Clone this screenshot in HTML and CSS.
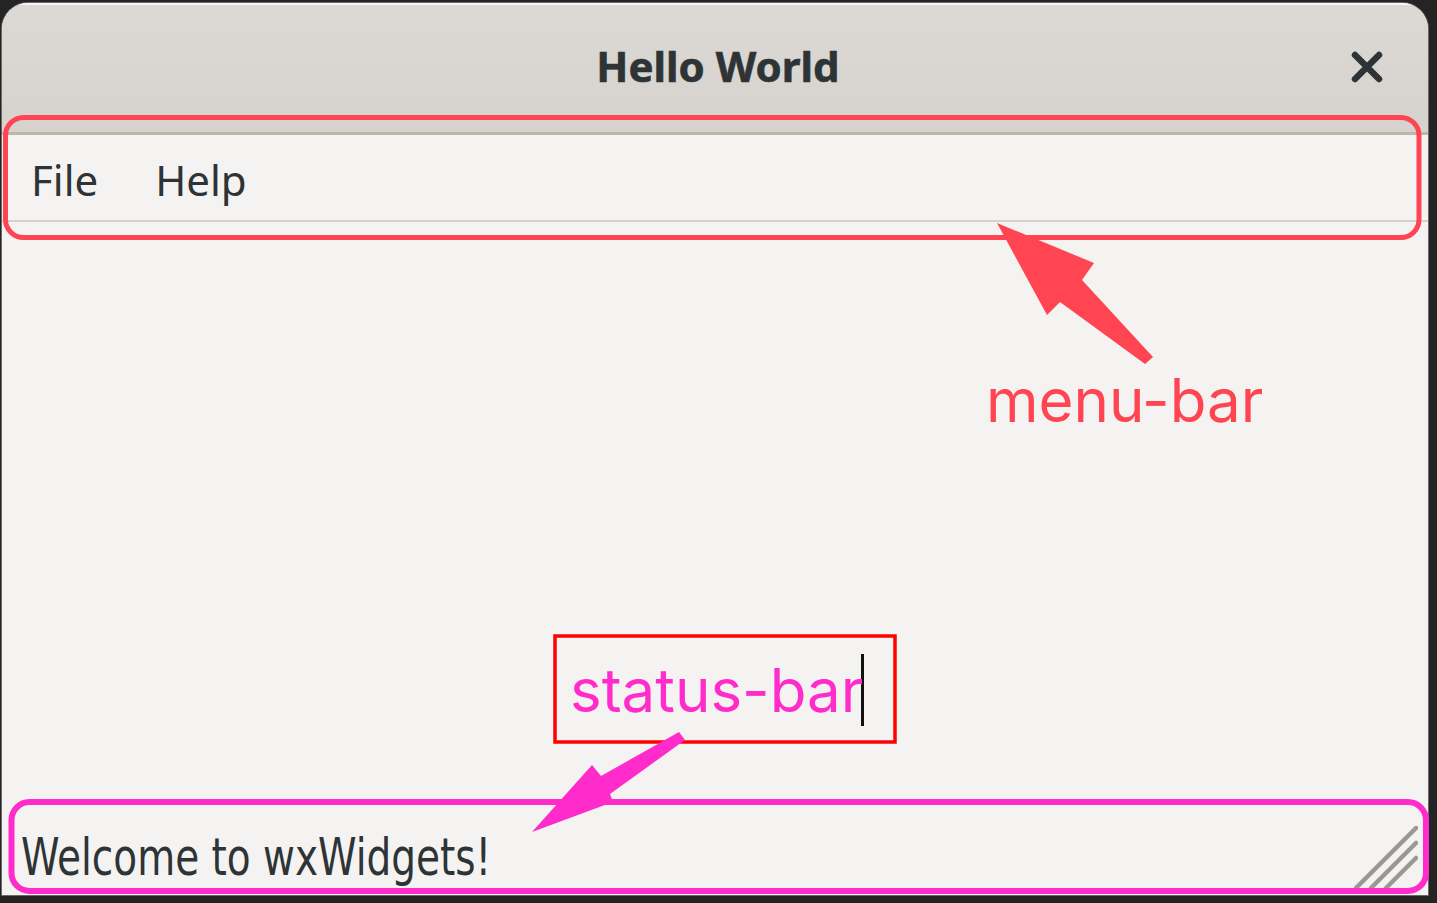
FILE: index.html
```html
<!DOCTYPE html>
<html lang="en">
<head>
<meta charset="utf-8">
<title>Hello World</title>
<link rel="stylesheet" href="styles.css">
</head>
<body>
<div class="window">
  <header class="titlebar">
    <div class="title">Hello World</div>
    <button class="close" aria-label="Close">
      <svg width="32" height="32" viewBox="0 0 32 32"><path d="M4 4 L28 28 M28 4 L4 28" stroke="#2e3436" stroke-width="6.5" stroke-linecap="round"/></svg>
    </button>
  </header>
  <nav class="menubar">
    <span class="menu-item">File</span>
    <span class="menu-item">Help</span>
  </nav>
  <main class="content"></main>
  <footer class="statusbar">
    <span class="status-text">Welcome to wxWidgets!</span>
    <svg class="grip" width="64" height="64" viewBox="0 0 64 64">
      <path d="M2 62 L62 2 M17 62 L62 17 M32 62 L62 32" stroke="#9c9891" stroke-width="4.5" stroke-linecap="round"/>
    </svg>
  </footer>
</div>

<svg class="annot" width="1437" height="903" viewBox="0 0 1437 903">
  <rect x="5.5" y="117.5" width="1413.5" height="120" rx="18" ry="18" fill="none" stroke="#ff4552" stroke-width="5"/>
  <polygon points="997,223 1094,263 1082,280 1153,357 1145,364 1060,302 1047,315" fill="#ff4552"/>
  <rect x="555" y="636" width="340" height="106" fill="none" stroke="#ff0000" stroke-width="3.5"/>
  <rect x="861" y="654" width="3" height="72" fill="#111"/>
  <polygon points="532,832 592,765 601,776 679,732 685,740 610,794 613,802" fill="#ff2ccb"/>
  <rect x="11.5" y="802" width="1414.5" height="89" rx="18" ry="18" fill="none" stroke="#ff2ccb" stroke-width="6"/>
</svg>
<div class="label label-menu">menu-bar</div>
<div class="label label-status">status-bar</div>
</body>
</html>
```

FILE: styles.css
```css
html, body {
  margin: 0;
  padding: 0;
}
body {
  width: 1437px;
  height: 903px;
  background: #242424;
  overflow: hidden;
  position: relative;
  font-family: "Noto Sans", "DejaVu Sans", sans-serif;
}
.window {
  margin: 3px 0 0 2px;
  width: 1426px;
  height: 892px;
  background: #f4f3f1;
  border-radius: 26px 26px 0 0;
  overflow: hidden;
  display: flex;
  flex-direction: column;
  box-shadow: 0 0 0 1px #6b6966;
}
.titlebar {
  height: 129px;
  flex: none;
  background: linear-gradient(#dcd9d5, #d6d2ce);
  box-shadow: inset 0 2px 0 #f7f6f4;
  border-bottom: 3px solid #bdb6ad;
  display: flex;
  align-items: center;
  justify-content: center;
  position: relative;
}
.title {
  font-weight: 700;
  font-size: 42px;
  color: #2e3436;
  margin-top: -4px;
  margin-left: 6px;
  -webkit-text-stroke: 0.6px #2e3436;
}
.close {
  position: absolute;
  right: 45px;
  top: 48px;
  width: 32px;
  height: 32px;
  padding: 0;
  border: 0;
  background: none;
  display: flex;
}
.menubar {
  height: 85px;
  flex: none;
  border-bottom: 2px solid #d5d2ce;
  display: flex;
  align-items: center;
  padding-left: 29px;
  gap: 57px;
}
.menu-item {
  font-size: 42px;
  color: #2e3436;
  margin-top: 4px;
}
.content {
  flex: 1;
}
.statusbar {
  height: 80px;
  flex: none;
  position: relative;
  display: flex;
  align-items: flex-end;
  padding-left: 19px;
}
.status-text {
  font-family: "DejaVu Sans Condensed", "Noto Sans", sans-serif;
  font-size: 51px;
  color: #2e3436;
  line-height: 1;
  margin-bottom: 12px;
  white-space: nowrap;
  transform: scaleX(0.85);
  transform-origin: left bottom;
}
.grip {
  position: absolute;
  right: 10px;
  bottom: 5px;
}
.annot {
  position: absolute;
  left: 0;
  top: 0;
  pointer-events: none;
}
.label {
  position: absolute;
  font-family: "Inter", "Noto Sans", sans-serif;
  font-size: 60px;
  line-height: 60px;
  white-space: nowrap;
}
.label-menu {
  left: 986px;
  top: 370px;
  color: #ff4552;
}
.label-status {
  left: 570px;
  top: 660px;
  color: #ff2ccb;
}
```
